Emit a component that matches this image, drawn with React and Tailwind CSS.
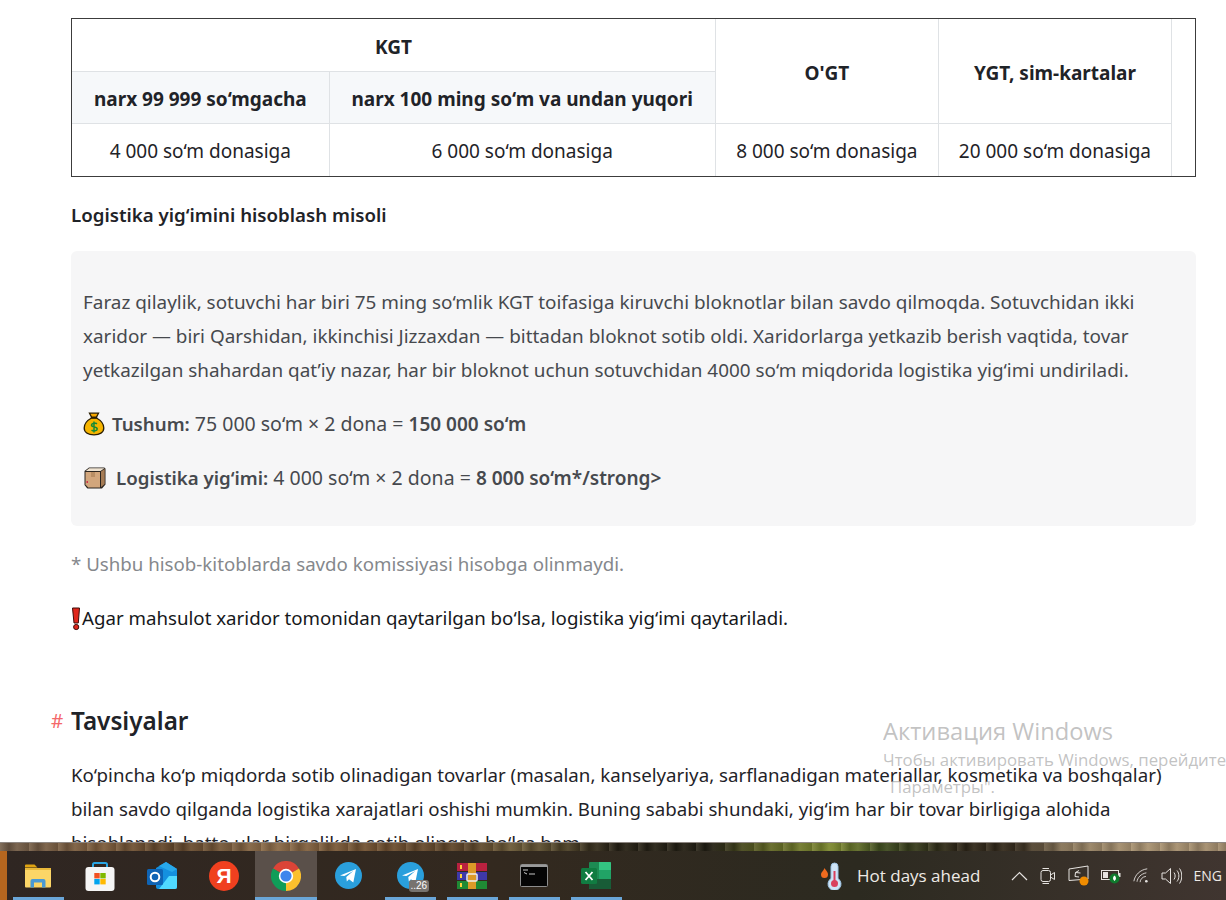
const Money = () => (
  <svg width="22" height="24" viewBox="0 0 22 24" className="inline-block shrink-0">
    <path d="M6.500 1.200h9l-2.300 4.300H8.800z" fill="#f7a800" stroke="#2a1e04" strokeWidth="1.300" />
    <path d="M8.500 6C4 8.500 1.200 12 1.200 16c0 4.700 4.300 6.800 9.800 6.800s9.800-2.100 9.800-6.800c0-4-2.800-7.500-7.300-10z" fill="#f7b500" stroke="#2a1e04" strokeWidth="1.300" />
    <rect x="7.800" y="4.700" width="6.400" height="1.700" fill="#2a1e04" />
    <path d="M14 11.800c-1.800-1.300-5.500-.8-5.500 1.300 0 2.700 5.700 1.300 5.700 4 0 2-3.800 2.300-5.700 1.100M11 9.500v11" stroke="#168a35" strokeWidth="1.500" fill="none" />
  </svg>
);
const Box = () => (
  <svg width="24" height="24" viewBox="0 0 24 24" className="inline-block shrink-0">
    <path d="M1.500 5 6 1.500h15a1.500 1.500 0 0 1 1.500 1.500v15.500L19 22.500H5a1.500 1.500 0 0 1-1.500-1L1.500 19z" fill="#2b2520" />
    <path d="M6.300 2.300H21.500L17.500 5H2.800z" fill="#efe3d2" />
    <path d="M2.500 6H17v15.500H5.200L2.500 18.500z" fill="#d2a67c" />
    <path d="M18 5.500l3.700-2.500v15l-3.700 3.200z" fill="#a67c55" />
    <path d="M8 6h4v5H8z" fill="#b98e64" />
    <rect x="3.500" y="15" width="1.500" height="2" fill="#d2334a" />
  </svg>
);
const Excl = () => (
  <svg width="11" height="24" viewBox="0 0 11 24" className="inline-block shrink-0 align-[-6px]">
    <path d="M1.500 1h7l-1.200 15H3z" fill="#e0261b" stroke="#3d0d09" />
    <circle cx="5.200" cy="20" r="2.600" fill="#e0261b" stroke="#3d0d09" />
  </svg>
);

const Folder = () => (
  <svg width="28" height="26" viewBox="0 0 28 26">
    <path d="M1 2.500a1 1 0 0 1 1-1h8.500l3 3H1z" fill="#e0a412" />
    <path d="M1 5h26v18.500a1 1 0 0 1-1 1H2a1 1 0 0 1-1-1z" fill="#fcd667" />
    <path d="M1 5h26v2H1z" fill="#e9b93a" />
    <path d="M6.500 24.500v-6.500a2 2 0 0 1 2-2h11a2 2 0 0 1 2 2v6.500h-3.500v-5H10v5z" fill="#4a9ad4" />
  </svg>
);
const Store = () => (
  <svg width="30" height="30" viewBox="0 0 30 30">
    <path d="M8 8V3.500a1.500 1.500 0 0 1 1.500-1.500h11a1.500 1.500 0 0 1 1.500 1.500V8" fill="none" stroke="#2aa6e4" strokeWidth="2" />
    <rect x="0.500" y="6" width="29" height="24" rx="3" fill="#f5f5f5" />
    <rect x="9.300" y="12" width="5.400" height="5.400" fill="#f25022" />
    <rect x="15.300" y="12" width="5.400" height="5.400" fill="#7fba00" />
    <rect x="9.300" y="18" width="5.400" height="5.400" fill="#00a4ef" />
    <rect x="15.300" y="18" width="5.400" height="5.400" fill="#ffb900" />
  </svg>
);
const Outlook = () => (
  <svg width="31" height="28" viewBox="0 0 31 28">
    <path d="M9 6 19 0l11 7v18a2 2 0 0 1-2 2H11a2 2 0 0 1-2-2z" fill="#1490df" />
    <path d="M19 0l11 7-5 3L12 4z" fill="#28a8ea" />
    <path d="M12 27 22 14h8v11a2 2 0 0 1-2 2z" fill="#50d9ff" />
    <rect x="0" y="7" width="16" height="16" rx="1.500" fill="#0f64b5" />
    <circle cx="8" cy="15" r="4.300" fill="none" stroke="#fff" strokeWidth="2" />
  </svg>
);
const Yandex = () => (
  <div className="flex h-[30px] w-[30px] items-center justify-center rounded-full bg-[#f0401f] font-['Liberation_Sans',sans-serif] text-[21px] font-bold leading-none text-white">Я</div>
);
const Chrome = () => (
  <svg width="30" height="30" viewBox="0 0 30 30">
    <path d="M15 15 2 7.500A15 15 0 0 1 28 7.500z" fill="#db4437" />
    <path d="M15 15 2 7.500A15 15 0 0 0 15 30z" fill="#0f9d58" />
    <path d="M15 15 28 7.500A15 15 0 0 1 15 30z" fill="#fbc02d" />
    <circle cx="15" cy="15" r="7.200" fill="#fff" />
    <circle cx="15" cy="15" r="5.600" fill="#3f86ec" />
  </svg>
);
const Telegram = () => (
  <svg width="27" height="27" viewBox="0 0 27 27">
    <circle cx="13.500" cy="13.500" r="13.500" fill="#2a9fdc" />
    <path d="M5 13.500 21 7l-2.700 13.500-4.300-3.200-2.200 2.200-.5-4.500 7-6-9 5z" fill="#fff" />
  </svg>
);
const Winrar = () => (
  <svg width="30" height="26" viewBox="0 0 30 26">
    <rect x="0" y="0" width="30" height="8" fill="#b8213f" />
    <rect x="0" y="9" width="30" height="8" fill="#3e38a8" />
    <rect x="0" y="18" width="30" height="8" fill="#1f8a34" />
    <rect x="3" y="2" width="2" height="4" fill="#ffd23c" />
    <rect x="3" y="11" width="2" height="4" fill="#ffd23c" />
    <rect x="3" y="20" width="2" height="4" fill="#ffd23c" />
    <rect x="11" y="0" width="8" height="26" fill="#dc9a28" />
    <rect x="10" y="11" width="10" height="7" rx="1" fill="none" stroke="#f0f0f0" strokeWidth="1.500" />
  </svg>
);
const Cmd = () => (
  <svg width="28" height="23" viewBox="0 0 28 23">
    <rect x="0.500" y="0.500" width="27" height="22" rx="1" fill="#050505" stroke="#8d8d8d" />
    <rect x="1" y="1" width="26" height="2" fill="#9a9a9a" />
    <path d="M3 6h5M4 8.500l3 1.500M9 10h6" stroke="#c8c8c8" strokeWidth="1" />
  </svg>
);
const Excel = () => (
  <svg width="30" height="27" viewBox="0 0 30 27">
    <path d="M8 1a1 1 0 0 1 1-1h20a1 1 0 0 1 1 1v25a1 1 0 0 1-1 1H9a1 1 0 0 1-1-1z" fill="#1d8a53" />
    <path d="M18 0h11a1 1 0 0 1 1 1v7H18z" fill="#33c481" />
    <path d="M18 8h12v9H18z" fill="#21a366" />
    <path d="M8 17h22v9a1 1 0 0 1-1 1H9a1 1 0 0 1-1-1z" fill="#185c37" />
    <rect x="0" y="6" width="16" height="16" rx="1.500" fill="#107c41" />
    <path d="m4.500 10 7 8M11.500 10l-7 8" stroke="#fff" strokeWidth="1.800" />
  </svg>
);
const Thermo = () => (
  <svg width="24" height="28" viewBox="0 0 24 28">
    <path d="M4.500 6C6 9 8 9.500 8 12.500a3.500 3.500 0 0 1-7 0C1 10 3.500 9 4.500 6z" fill="#ef6a1e" />
    <path d="M11 4.500a3.500 3.500 0 0 1 7 0v12a6.500 6.500 0 1 1-7 0z" fill="#cfe4f6" stroke="#9cc3e4" />
    <circle cx="14.500" cy="21.500" r="3.500" fill="#d9405d" />
    <rect x="13.500" y="9" width="2" height="11" fill="#d9405d" />
  </svg>
);
const Chevron = () => (
  <svg width="17" height="10" viewBox="0 0 17 10" fill="none" stroke="#e6e3e0" strokeWidth="1.200"><path d="m1 9 7.500-7.500L16 9" /></svg>
);
const Meet = () => (
  <svg width="16" height="18" viewBox="0 0 16 18" fill="none" stroke="#e6e3e0" strokeWidth="1"><rect x="1" y="3.500" width="9.500" height="11" rx="2" /><path d="m10.500 8 4-2.500v7l-4-2.500M2.500 1.500h6.500M2.500 16.500h6.500" /></svg>
);
const Display = () => (
  <svg width="21" height="21" viewBox="0 0 21 21">
    <path d="M1 4 20 1v13L1 15.500z" fill="none" stroke="#e6e3e0" />
    <path d="M11 5.500 7.500 7.500 7 11.500l4 .5M7.500 7.500l5 .5" fill="none" stroke="#e6e3e0" />
    <circle cx="16" cy="16" r="4.500" fill="#f08c00" />
  </svg>
);
const Battery = () => (
  <svg width="20" height="16" viewBox="0 0 20 16">
    <rect x="0.500" y="2.500" width="17" height="9" fill="none" stroke="#e6e3e0" />
    <rect x="2" y="4" width="5" height="6" fill="#e6e3e0" />
    <rect x="18" y="5" width="1.500" height="4" fill="#e6e3e0" />
    <circle cx="13.500" cy="10.500" r="5" fill="#0f7b2d" />
    <path d="M13.500 7.500c2 1.500 2 4-.0 5.500-2-1.500-2-4 0-5.500z" fill="#fff" />
  </svg>
);
const Wifi = () => (
  <svg width="16" height="17" viewBox="0 0 18 17" fill="none" stroke="#e6e3e0" strokeWidth="1"><path d="M1 15C2 8 8 2 16 1M4.500 15.500C5 11 9 6.500 15 5.500M8 16c0-3 2.500-6 6.500-6.500" /><circle cx="15" cy="15" r="1.500" fill="#e6e3e0" stroke="none" /></svg>
);
const Volume = () => (
  <svg width="21" height="18" viewBox="0 0 21 18" fill="none" stroke="#e6e3e0" strokeWidth="1"><path d="M1 6h3.500L9.500 1.500v15L4.500 12H1zM13 5.500c1.500 2 1.500 5 0 7M16 3.500c2.500 3 2.500 8 0 11M18.500 1.500c3 4 3 11 0 15" /></svg>
);

const items = [
  { c: <Folder />, u: true },
  { c: <Store /> },
  { c: <Outlook /> },
  { c: <Yandex /> },
  { c: <Chrome />, u: true, active: true },
  { c: <Telegram /> },
  { c: <div className="relative"><Telegram /><span className="absolute -bottom-[3px] left-[12px] rounded-[3px] bg-[#77736f] px-[2px] font-['Liberation_Sans',sans-serif] text-[10px] leading-[12px] text-white">..26</span></div>, u: true },
  { c: <Winrar />, u: true },
  { c: <Cmd />, u: true },
  { c: <Excel />, u: true },
];

export default function App() {
  return (
    <div className="relative flex h-[900px] w-[1226px] flex-col overflow-hidden bg-white font-['Noto_Sans',sans-serif] text-[18.700px] text-[#1f2328]">
      <main className="h-[842px] shrink-0 overflow-hidden pl-[71px] pr-[30px] pt-[18px]">
        <div className="border border-[#3c3c3c]">
          <table className="w-[1100px] table-fixed border-collapse text-center text-[19px] leading-[22px]">
            <colgroup>
              <col className="w-[257px]" />
              <col className="w-[386px]" />
              <col className="w-[223px]" />
              <col className="w-[233px]" />
            </colgroup>
            <tbody>
              <tr className="h-[52px]">
                <th colSpan={2} className="border-r border-b border-[#dfe2e5] pt-[5px] font-bold">KGT</th>
                <th rowSpan={2} className="border-r border-b border-[#dfe2e5] pt-[5px] font-bold">O'GT</th>
                <th rowSpan={2} className="border-r border-b border-[#dfe2e5] pt-[5px] font-bold">YGT, sim-kartalar</th>
              </tr>
              <tr className="h-[52px] bg-[#f6f8fa]">
                <th className="border-r border-b border-[#dfe2e5] pt-[3px] font-bold">narx 99 999 so‘mgacha</th>
                <th className="border-r border-b border-[#dfe2e5] pt-[3px] font-bold">narx 100 ming so‘m va undan yuqori</th>
              </tr>
              <tr className="h-[53px]">
                <td className="border-r border-[#dfe2e5] pt-[3px]">4 000 so‘m donasiga</td>
                <td className="border-r border-[#dfe2e5] pt-[3px]">6 000 so‘m donasiga</td>
                <td className="border-r border-[#dfe2e5] pt-[3px]">8 000 so‘m donasiga</td>
                <td className="border-r border-[#dfe2e5] pt-[3px]">20 000 so‘m donasiga</td>
              </tr>
            </tbody>
          </table>
        </div>

        <p className="mt-[21px] font-semibold leading-[34px] text-[#1f2328]">Logistika yig‘imini hisoblash misoli</p>

        <div className="mt-[19px] h-[275px] rounded-[6px] bg-[#f6f6f7] px-[12px] pt-[34px] text-[#46494e]">
          <p className="text-[18.900px] leading-[34px]">
            Faraz qilaylik, sotuvchi har biri 75 ming so‘mlik KGT toifasiga kiruvchi bloknotlar bilan savdo qilmoqda. Sotuvchidan ikki xaridor — biri Qarshidan, ikkinchisi Jizzaxdan — bittadan bloknot sotib oldi. Xaridorlarga yetkazib berish vaqtida, tovar yetkazilgan shahardan qat’iy nazar, har bir bloknot uchun sotuvchidan 4000 so‘m miqdorida logistika yig‘imi undiriladi.
          </p>
          <p className="mt-[20px] flex h-[34px] items-center gap-[7px] whitespace-pre text-[19.500px]">
            <Money /><span><strong className="text-[18.700px] font-semibold">Tushum:</strong> 75 000 so‘m × 2 dona = <strong className="text-[19px] font-semibold">150 000 so‘m</strong></span>
          </p>
          <p className="mt-[20px] flex h-[34px] items-center gap-[9px] whitespace-pre text-[19.500px]">
            <Box /><span><strong className="text-[18.700px] font-semibold">Logistika yig‘imi:</strong> 4 000 so‘m × 2 dona = <strong className="text-[19px] font-semibold">8 000 so‘m*/strong&gt;</strong></span>
          </p>
        </div>

        <p className="mt-[21px] leading-[34px] text-[#85888c]">* Ushbu hisob-kitoblarda savdo komissiyasi hisobga olinmaydi.</p>
        <p className="mt-[20px] leading-[34px] text-[#16181b]"><Excl />Agar mahsulot xaridor tomonidan qaytarilgan bo‘lsa, logistika yig‘imi qaytariladi.</p>

        <h2 className="relative mt-[69px] text-[24.300px] font-semibold leading-[34px] text-[#1f2328]">
          <span className="absolute -left-[20px] top-0 text-[19px] font-normal text-[#f4686a]">#</span>
          Tavsiyalar
        </h2>
        <p className="mt-[20px] w-[1125px] leading-[34px] text-[#1f2328]">
          Ko‘pincha ko‘p miqdorda sotib olinadigan tovarlar (masalan, kanselyariya, sarflanadigan materiallar, kosmetika va boshqalar) bilan savdo qilganda logistika xarajatlari oshishi mumkin. Buning sababi shundaki, yig‘im har bir tovar birligiga alohida hisoblanadi, hatto ular birgalikda sotib olingan bo‘lsa ham.
        </p>
      </main>

      <div className="h-[9px] shrink-0 border-t border-[#8c8580] bg-[repeating-linear-gradient(90deg,rgba(255,240,210,0.14)_0px,rgba(0,0,0,0.16)_9px,rgba(255,240,210,0.08)_17px,rgba(0,0,0,0.12)_29px),linear-gradient(90deg,#6e5a48_0%,#7c5c3c_8%,#5e4329_14%,#8a6a48_22%,#6f4f30_30%,#5a4228_38%,#6a5a38_42%,#4a3f26_46%,#241f14_50%,#1f1c12_58%,#5a5f22_62%,#7d8a30_68%,#3c4a1e_72%,#2a2316_78%,#33291c_83%,#8d7a5e_87%,#a89272_93%,#a08a6c_100%)]" />

      <footer className="flex h-[49px] shrink-0 bg-[linear-gradient(90deg,#2f2622_0%,#33291f_40%,#2c2a20_70%,#403530_100%)] font-['Open_Sans',sans-serif] text-[#eeeae6]">
        <div className="w-[7px] bg-[#b5661f]" />
        <div className="flex">
          {items.map((it, i) => (
            <div key={i} className={`relative flex h-full w-[62px] items-center justify-center ${it.active ? 'bg-[#5a504a]' : ''}`}>
              {it.c}
              {it.u && <span className={`absolute bottom-0 h-[3px] bg-[#6aa6d8] ${it.active ? 'left-0 right-0' : 'left-[6px] right-[5px]'}`} />}
            </div>
          ))}
        </div>
        <div className="ml-[193px] flex items-center">
          <Thermo />
          <span className="ml-[13px] text-[17px]">Hot days ahead</span>
          <div className="ml-[31px] flex items-center gap-[12px]">
            <Chevron />
            <Meet />
            <Display />
            <Battery />
            <Wifi />
            <Volume />
          </div>
          <span className="ml-[11px] text-[14px]">ENG</span>
        </div>
      </footer>

      <div className="pointer-events-none absolute left-[883px] top-[715px] w-[343px] overflow-hidden whitespace-nowrap font-['Open_Sans',sans-serif] text-[#a8a8a8]/70">
        <div className="text-[23.700px] leading-[32px]">Активация Windows</div>
        <div className="text-[16.800px] leading-[26px]">Чтобы активировать Windows, перейдите</div>
        <div className="pl-[7px] text-[16.800px] leading-[27px]">Параметры".</div>
      </div>
    </div>
  );
}
